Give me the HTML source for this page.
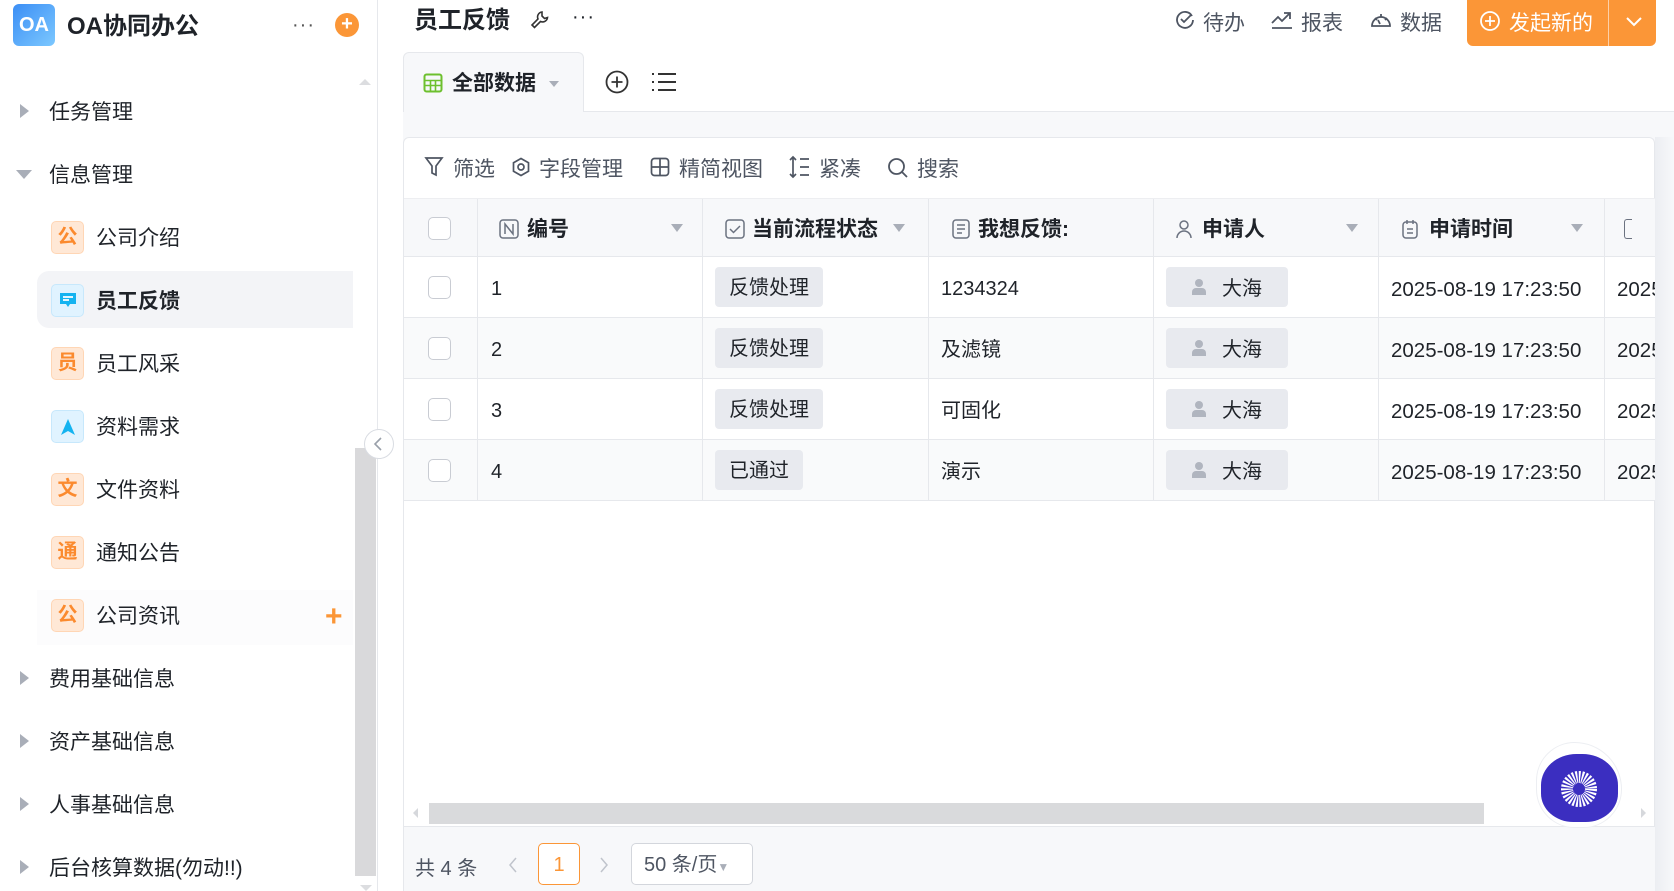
<!DOCTYPE html>
<html><head><meta charset="utf-8">
<style>
*{box-sizing:border-box;margin:0;padding:0}
body{width:1674px;height:891px;overflow:hidden;background:#fff;font-family:"Liberation Sans","Noto Sans CJK SC",sans-serif;color:#1f2329;position:relative}
.a{position:absolute}
.sb{left:0;top:0;width:378px;height:891px;border-right:1px solid #e6e8ec;background:#fff}
.mi{position:absolute;left:49px;font-size:21px;color:#1f2329;line-height:24px}
.tri{position:absolute;left:20px;width:0;height:0;border-top:7px solid transparent;border-bottom:7px solid transparent;border-left:9px solid #a9aeb8}
.tri.d{left:16px;border-left:8px solid transparent;border-right:8px solid transparent;border-top:9px solid #a9aeb8;border-bottom:0}
.ic{position:absolute;left:51px;width:33px;height:33px;border-radius:5px;background:#ffe8d6;border:1px solid #ffd6b5;color:#fb8a2e;font-weight:bold;font-size:20px;text-align:center;line-height:31px}
.ic.b{background:#e0f3ff;border-color:#c7e8fc;color:#14b3f0}
.st{position:absolute;left:96px;font-size:21px;line-height:24px}
.hd{font-size:21px;color:#4e5562}
.cell{position:absolute;border-right:1px solid #e6e8ec;height:100%;top:0}
.row{position:absolute;left:404px;width:1251px;height:61px;border-bottom:1px solid #e6e8ec;font-size:20px}
.cb{position:absolute;left:24px;top:19px;width:23px;height:23px;border:1px solid #c9ccd3;border-radius:5px;background:#fff}
.tag{position:absolute;top:10px;height:40px;background:#e8eaef;border-radius:4px;font-size:20px;line-height:42px;padding:0 14px}
.tx{position:absolute;top:2px;line-height:61px}
.dt{font-size:20.5px}
.th{position:absolute;top:0;line-height:59px;font-weight:bold;font-size:21px}
.ar{position:absolute;top:25px;width:0;height:0;border-left:6px solid transparent;border-right:6px solid transparent;border-top:8px solid #a9aeb8}
</style></head><body>
<!-- sidebar -->
<div class="a sb">
 <div class="a" style="left:13px;top:4px;width:42px;height:42px;border-radius:6px;background:linear-gradient(135deg,#3b8ef5,#7cc8ff);color:#fff;font-weight:bold;font-size:20px;line-height:42px;text-align:center">OA</div>
 <div class="a" style="left:67px;top:12px;font-size:24px;font-weight:bold;line-height:30px">OA协同办公</div>
 <div class="a" style="left:292px;top:14px;font-size:20px;color:#555;letter-spacing:1px">···</div>
 <div class="a" style="left:335px;top:13px;width:24px;height:24px;border-radius:50%;background:#fb9637;color:#fff;text-align:center;line-height:23px;font-size:20px;font-weight:bold">+</div>
 <div class="a" style="left:359px;top:79px;border-left:6px solid transparent;border-right:6px solid transparent;border-bottom:6px solid #dcdde0"></div>
 <div class="tri" style="top:104px"></div><div class="mi" style="top:101px">任务管理</div>
 <div class="tri d" style="top:170px"></div><div class="mi" style="top:164px">信息管理</div>
 <div class="ic" style="top:221px">公</div><div class="st" style="top:227px">公司介绍</div>
 <div class="a" style="left:37px;top:271px;width:316px;height:57px;background:#f3f4f7;border-radius:12px 0 0 12px"></div>
 <div class="ic b" style="top:284px"><svg width="20" height="18" viewBox="0 0 20 18" style="margin-top:7px"><path d="M2 1h16v11h-6l-2 3-2-3H2z" fill="#14b3f0"/><path d="M5 5h10M5 8h6" stroke="#fff" stroke-width="1.8"/></svg></div>
 <div class="st" style="top:290px;font-weight:bold">员工反馈</div>
 <div class="ic" style="top:347px">员</div><div class="st" style="top:353px">员工风采</div>
 <div class="ic b" style="top:410px"><svg width="18" height="18" viewBox="0 0 18 18" style="margin-top:7px"><path d="M9 1L2 17l7-4 7 4z" fill="#14b3f0"/></svg></div><div class="st" style="top:416px">资料需求</div>
 <div class="ic" style="top:473px">文</div><div class="st" style="top:479px">文件资料</div>
 <div class="ic" style="top:536px">通</div><div class="st" style="top:542px">通知公告</div>
 <div class="a" style="left:37px;top:590px;width:316px;height:55px;background:#fcfcfd"></div>
 <div class="ic" style="top:599px">公</div><div class="st" style="top:605px">公司资讯</div>
 <div class="a" style="left:325px;top:605px;color:#fb9637;font-size:30px;line-height:24px;font-weight:bold">+</div>
 <div class="tri" style="top:671px"></div><div class="mi" style="top:668px">费用基础信息</div>
 <div class="tri" style="top:734px"></div><div class="mi" style="top:731px">资产基础信息</div>
 <div class="tri" style="top:797px"></div><div class="mi" style="top:794px">人事基础信息</div>
 <div class="tri" style="top:860px"></div><div class="mi" style="top:857px">后台核算数据(勿动!!)</div>
 <div class="a" style="left:355px;top:448px;width:21px;height:428px;background:#d9d9db"></div>
 <div class="a" style="left:360px;top:885px;border-left:6px solid transparent;border-right:6px solid transparent;border-top:6px solid #dcdde0"></div>
</div>
<div class="a" style="left:364px;top:429px;width:30px;height:30px;border-radius:50%;background:#fff;border:1px solid #d9dce2;z-index:5"><svg width="28" height="28" viewBox="0 0 28 28"><path d="M16 8l-6 6 6 6" stroke="#9aa0aa" stroke-width="1.6" fill="none"/></svg></div>
<!-- header -->
<div class="a" style="left:414px;top:6px;font-size:24px;font-weight:bold;line-height:30px">员工反馈</div>
<svg class="a" style="left:529px;top:9px" width="22" height="22" viewBox="0 0 22 22"><path d="M13 3a5 5 0 0 0-4 7l-6 6 2.5 2.5 6-6a5 5 0 0 0 7-4l-3 1-2.5-2.5z" fill="none" stroke="#333" stroke-width="1.6"/></svg>
<div class="a" style="left:572px;top:6px;font-size:20px;letter-spacing:1px">···</div>
<svg class="a" style="left:1174px;top:9px" width="22" height="22" viewBox="0 0 22 22"><path d="M18 7a8 8 0 1 0 1 4" fill="none" stroke="#4e5562" stroke-width="1.8"/><path d="M7 10l3 3 7-7" fill="none" stroke="#4e5562" stroke-width="1.8"/></svg>
<div class="a hd" style="left:1203px;top:7px">待办</div>
<svg class="a" style="left:1270px;top:9px" width="24" height="22" viewBox="0 0 24 22"><path d="M2 14l6-6 4 4 8-8M14 4h6v6M2 19h20" fill="none" stroke="#4e5562" stroke-width="1.8"/></svg>
<div class="a hd" style="left:1301px;top:7px">报表</div>
<svg class="a" style="left:1369px;top:9px" width="24" height="22" viewBox="0 0 24 22"><path d="M3 17a9 9 0 1 1 18 0z" fill="none" stroke="#4e5562" stroke-width="1.8"/><path d="M12 5v3M6 9l2 2M18 9l-2 2M11 15l-2-4" stroke="#4e5562" stroke-width="1.8"/></svg>
<div class="a hd" style="left:1400px;top:7px">数据</div>
<div class="a" style="left:1467px;top:0;width:189px;height:46px;background:#fb9637;border-radius:0 0 6px 6px;color:#fff">
 <svg class="a" style="left:12px;top:10px" width="22" height="22" viewBox="0 0 22 22"><circle cx="11" cy="11" r="9" fill="none" stroke="#fff" stroke-width="1.8"/><path d="M11 6v10M6 11h10" stroke="#fff" stroke-width="1.8"/></svg>
 <div class="a" style="left:42px;top:7px;font-size:21px">发起新的</div>
 <div class="a" style="left:141px;top:0;width:1px;height:46px;background:#fdd0a8"></div>
 <svg class="a" style="left:156px;top:12px" width="22" height="20" viewBox="0 0 22 20"><path d="M4 6l7 7 7-7" fill="none" stroke="#fff" stroke-width="2"/></svg>
</div>
<!-- tabs -->
<div class="a" style="left:403px;top:111px;width:1271px;height:780px;background:#f7f8fa;border-top:1px solid #e6e8ec"></div>
<div class="a" style="left:403px;top:52px;width:181px;height:60px;background:#f7f8fa;border:1px solid #e6e8ec;border-bottom:none;border-radius:6px 6px 0 0"></div>
<svg class="a" style="left:423px;top:73px" width="20" height="20" viewBox="0 0 20 20"><rect x="1.5" y="1.5" width="17" height="17" rx="2" fill="none" stroke="#6dc02e" stroke-width="2"/><path d="M1.5 7.5h17M1.5 12.5h17M7.5 7.5v11M12.5 7.5v11" stroke="#6dc02e" stroke-width="1.6"/></svg>
<div class="a" style="left:452px;top:70px;font-size:21px;font-weight:bold;line-height:28px">全部数据</div>
<div class="a" style="left:549px;top:81px;border-left:5px solid transparent;border-right:5px solid transparent;border-top:6px solid #a9aeb8"></div>
<svg class="a" style="left:604px;top:69px" width="26" height="26" viewBox="0 0 26 26"><circle cx="13" cy="13" r="10.5" fill="none" stroke="#333" stroke-width="1.8"/><path d="M13 7.5v11M7.5 13h11" stroke="#333" stroke-width="1.8"/></svg>
<svg class="a" style="left:651px;top:71px" width="26" height="22" viewBox="0 0 26 22"><path d="M1 3h2M1 11h2M1 19h2M7 3h18M7 11h18M7 19h18" stroke="#333" stroke-width="2"/></svg>
<!-- card -->
<div class="a" style="left:403px;top:137px;width:1252px;height:754px;background:#fff;border:1px solid #e6e8ec;border-radius:6px 6px 0 0;border-bottom:none"></div>
<div class="a" style="left:404px;top:826px;width:1251px;height:65px;background:#f7f8fa;border-top:1px solid #e6e8ec"></div>
<!-- toolbar -->
<svg class="a" style="left:424px;top:156px" width="20" height="22" viewBox="0 0 20 22"><path d="M2 2h16l-6 8v9l-4-2v-7z" fill="none" stroke="#4e5562" stroke-width="1.7"/></svg>
<div class="a hd" style="left:453px;top:153px">筛选</div>
<svg class="a" style="left:511px;top:157px" width="20" height="20" viewBox="0 0 20 20"><path d="M10 1.5l7.5 4.3v8.4L10 18.5l-7.5-4.3V5.8z" fill="none" stroke="#4e5562" stroke-width="1.7"/><circle cx="10" cy="10" r="3" fill="none" stroke="#4e5562" stroke-width="1.7"/></svg>
<div class="a hd" style="left:539px;top:153px">字段管理</div>
<svg class="a" style="left:650px;top:157px" width="20" height="20" viewBox="0 0 20 20"><rect x="1.5" y="1.5" width="17" height="17" rx="3" fill="none" stroke="#4e5562" stroke-width="1.7"/><path d="M10 1.5v17M1.5 10h17" stroke="#4e5562" stroke-width="1.7"/></svg>
<div class="a hd" style="left:679px;top:153px">精简视图</div>
<svg class="a" style="left:788px;top:155px" width="24" height="24" viewBox="0 0 24 24"><path d="M5 2v20M2 5l3-3 3 3M2 19l3 3 3-3M12 4h9M12 12h9M12 20h9" fill="none" stroke="#4e5562" stroke-width="1.7"/></svg>
<div class="a hd" style="left:819px;top:153px">紧凑</div>
<svg class="a" style="left:887px;top:157px" width="22" height="22" viewBox="0 0 22 22"><circle cx="9.5" cy="9.5" r="7.5" fill="none" stroke="#4e5562" stroke-width="1.8"/><path d="M15 15l5 5" stroke="#4e5562" stroke-width="1.8"/></svg>
<div class="a hd" style="left:917px;top:153px">搜索</div>
<!-- table header -->
<div class="a" style="left:404px;top:198px;width:1251px;height:59px;background:#f7f8fa;border-top:1px solid #edeef1;border-bottom:1px solid #e6e8ec">
 <div class="cell" style="left:0;width:74px"><div class="cb" style="top:18px"></div></div>
 <div class="cell" style="left:74px;width:225px"><svg class="a" style="left:21px;top:20px" width="20" height="20" viewBox="0 0 20 20"><rect x="1" y="1" width="18" height="18" rx="3" fill="none" stroke="#6b7280" stroke-width="1.5"/><path d="M6 15V5l8 10V5" fill="none" stroke="#6b7280" stroke-width="1.5"/></svg><div class="th" style="left:49px;top:1px">编号</div><div class="ar" style="left:193px"></div></div>
 <div class="cell" style="left:299px;width:226px"><svg class="a" style="left:22px;top:20px" width="20" height="20" viewBox="0 0 20 20"><rect x="1" y="1" width="18" height="18" rx="3" fill="none" stroke="#6b7280" stroke-width="1.5"/><path d="M5 10l3.5 3.5L15 7" fill="none" stroke="#6b7280" stroke-width="1.5"/></svg><div class="th" style="left:49px;top:1px">当前流程状态</div><div class="ar" style="left:190px"></div></div>
 <div class="cell" style="left:525px;width:225px"><svg class="a" style="left:22px;top:20px" width="20" height="20" viewBox="0 0 20 20"><rect x="2" y="1" width="16" height="18" rx="3" fill="none" stroke="#6b7280" stroke-width="1.5"/><path d="M6 6h8M6 10h8M6 14h5" stroke="#6b7280" stroke-width="1.5"/></svg><div class="th" style="left:49px;top:1px">我想反馈:</div></div>
 <div class="cell" style="left:750px;width:225px"><svg class="a" style="left:20px;top:20px" width="20" height="20" viewBox="0 0 20 20"><circle cx="10" cy="6" r="4" fill="none" stroke="#6b7280" stroke-width="1.5"/><path d="M3 19a7 7 0 0 1 14 0" fill="none" stroke="#6b7280" stroke-width="1.5"/></svg><div class="th" style="left:48px;top:1px">申请人</div><div class="ar" style="left:192px"></div></div>
 <div class="cell" style="left:975px;width:226px"><svg class="a" style="left:21px;top:20px" width="20" height="20" viewBox="0 0 20 20"><rect x="3" y="3" width="14" height="16" rx="3" fill="none" stroke="#6b7280" stroke-width="1.5"/><path d="M7 1v4M13 1v4M7 10h6M7 14h6" stroke="#6b7280" stroke-width="1.5"/></svg><div class="th" style="left:50px;top:1px">申请时间</div><div class="ar" style="left:192px"></div></div>
 <div class="a" style="left:1220px;top:20px;width:8px;height:20px;border:1.5px solid #6b7280;border-right:none;border-radius:3px 0 0 3px"></div>
</div>
<!-- rows -->
<div class="row" style="top:257px;background:#fff">
 <div class="cell" style="left:0;width:74px"><div class="cb"></div></div>
 <div class="cell" style="left:74px;width:225px"><div class="tx" style="left:13px">1</div></div>
 <div class="cell" style="left:299px;width:226px"><div class="tag" style="left:12px">反馈处理</div></div>
 <div class="cell" style="left:525px;width:225px"><div class="tx" style="left:12px">1234324</div></div>
 <div class="cell" style="left:750px;width:225px"></div>
 <div class="cell" style="left:975px;width:226px"><div class="tx dt" style="left:12px">2025-08-19 17:23:50</div></div>
 <div class="tx dt" style="left:1213px">2025</div>
</div>
<div class="row" style="top:318px;background:#f9fafb">
 <div class="cell" style="left:0;width:74px"><div class="cb"></div></div>
 <div class="cell" style="left:74px;width:225px"><div class="tx" style="left:13px">2</div></div>
 <div class="cell" style="left:299px;width:226px"><div class="tag" style="left:12px">反馈处理</div></div>
 <div class="cell" style="left:525px;width:225px"><div class="tx" style="left:12px">及滤镜</div></div>
 <div class="cell" style="left:750px;width:225px"></div>
 <div class="cell" style="left:975px;width:226px"><div class="tx dt" style="left:12px">2025-08-19 17:23:50</div></div>
 <div class="tx dt" style="left:1213px">2025</div>
</div>
<div class="row" style="top:379px;background:#fff">
 <div class="cell" style="left:0;width:74px"><div class="cb"></div></div>
 <div class="cell" style="left:74px;width:225px"><div class="tx" style="left:13px">3</div></div>
 <div class="cell" style="left:299px;width:226px"><div class="tag" style="left:12px">反馈处理</div></div>
 <div class="cell" style="left:525px;width:225px"><div class="tx" style="left:12px">可固化</div></div>
 <div class="cell" style="left:750px;width:225px"></div>
 <div class="cell" style="left:975px;width:226px"><div class="tx dt" style="left:12px">2025-08-19 17:23:50</div></div>
 <div class="tx dt" style="left:1213px">2025</div>
</div>
<div class="row" style="top:440px;background:#f9fafb">
 <div class="cell" style="left:0;width:74px"><div class="cb"></div></div>
 <div class="cell" style="left:74px;width:225px"><div class="tx" style="left:13px">4</div></div>
 <div class="cell" style="left:299px;width:226px"><div class="tag" style="left:12px">已通过</div></div>
 <div class="cell" style="left:525px;width:225px"><div class="tx" style="left:12px">演示</div></div>
 <div class="cell" style="left:750px;width:225px"></div>
 <div class="cell" style="left:975px;width:226px"><div class="tx dt" style="left:12px">2025-08-19 17:23:50</div></div>
 <div class="tx dt" style="left:1213px">2025</div>
</div>
<!-- person tags -->
<div class="a" style="left:1166px;top:267px;width:122px;height:40px;background:#e8eaef;border-radius:4px"><svg class="a" style="left:24px;top:11px" width="18" height="18" viewBox="0 0 18 18"><circle cx="9" cy="5" r="4" fill="#b0b5bf"/><path d="M2 17v-3a4 4 0 0 1 4-4h6a4 4 0 0 1 4 4v3z" fill="#b0b5bf"/></svg><div class="a" style="left:56px;top:1px;line-height:42px;font-size:20px">大海</div></div>
<div class="a" style="left:1166px;top:328px;width:122px;height:40px;background:#e8eaef;border-radius:4px"><svg class="a" style="left:24px;top:11px" width="18" height="18" viewBox="0 0 18 18"><circle cx="9" cy="5" r="4" fill="#b0b5bf"/><path d="M2 17v-3a4 4 0 0 1 4-4h6a4 4 0 0 1 4 4v3z" fill="#b0b5bf"/></svg><div class="a" style="left:56px;top:1px;line-height:42px;font-size:20px">大海</div></div>
<div class="a" style="left:1166px;top:389px;width:122px;height:40px;background:#e8eaef;border-radius:4px"><svg class="a" style="left:24px;top:11px" width="18" height="18" viewBox="0 0 18 18"><circle cx="9" cy="5" r="4" fill="#b0b5bf"/><path d="M2 17v-3a4 4 0 0 1 4-4h6a4 4 0 0 1 4 4v3z" fill="#b0b5bf"/></svg><div class="a" style="left:56px;top:1px;line-height:42px;font-size:20px">大海</div></div>
<div class="a" style="left:1166px;top:450px;width:122px;height:40px;background:#e8eaef;border-radius:4px"><svg class="a" style="left:24px;top:11px" width="18" height="18" viewBox="0 0 18 18"><circle cx="9" cy="5" r="4" fill="#b0b5bf"/><path d="M2 17v-3a4 4 0 0 1 4-4h6a4 4 0 0 1 4 4v3z" fill="#b0b5bf"/></svg><div class="a" style="left:56px;top:1px;line-height:42px;font-size:20px">大海</div></div>
<!-- right shadow -->
<div class="a" style="left:1655px;top:137px;width:19px;height:754px;background:linear-gradient(90deg,#eceef2,#f7f8fa)"></div>
<!-- h scrollbar -->
<div class="a" style="left:413px;top:808px;border-top:5px solid transparent;border-bottom:5px solid transparent;border-right:5px solid #d6d8dc"></div>
<div class="a" style="left:429px;top:803px;width:1055px;height:21px;background:#d9dadc"></div>
<div class="a" style="left:1641px;top:808px;border-top:5px solid transparent;border-bottom:5px solid transparent;border-left:5px solid #d6d8dc"></div>
<!-- pagination -->
<div class="a" style="left:415px;top:852px;font-size:20px;color:#4e5562">共 4 条</div>
<svg class="a" style="left:506px;top:855px" width="14" height="20" viewBox="0 0 14 20"><path d="M10 3l-6 7 6 7" fill="none" stroke="#c0c4cc" stroke-width="1.5"/></svg>
<div class="a" style="left:538px;top:843px;width:42px;height:42px;border:1px solid #fb9637;border-radius:5px;color:#fb9637;text-align:center;line-height:42px;font-size:20px;background:#fff">1</div>
<svg class="a" style="left:597px;top:855px" width="14" height="20" viewBox="0 0 14 20"><path d="M4 3l6 7-6 7" fill="none" stroke="#c0c4cc" stroke-width="1.5"/></svg>
<div class="a" style="left:631px;top:843px;width:122px;height:42px;border:1px solid #d3d6dc;border-radius:5px;background:#fff;font-size:20px;line-height:42px;padding-left:12px;color:#4e5562">50 条/页<span style="font-size:12px;color:#a9aeb8">▼</span></div>
<!-- float button -->
<div class="a" style="left:1536px;top:742px;width:86px;height:86px;background:#fff;border:1px solid #eceef2;border-radius:45% 55% 45% 45%"></div>
<div class="a" style="left:1541px;top:754px;width:77px;height:68px;background:#3b2ec0;border-radius:46% 46% 42% 42%"></div>
<svg class="a" style="left:1560px;top:770px" width="38" height="38" viewBox="0 0 38 38"><circle cx="19" cy="19" r="12" fill="none" stroke="#fff" stroke-width="12" stroke-dasharray="1.6 1.2"/><rect x="16" y="16" width="6" height="6" fill="#3b2ec0"/></svg>
</body></html>
